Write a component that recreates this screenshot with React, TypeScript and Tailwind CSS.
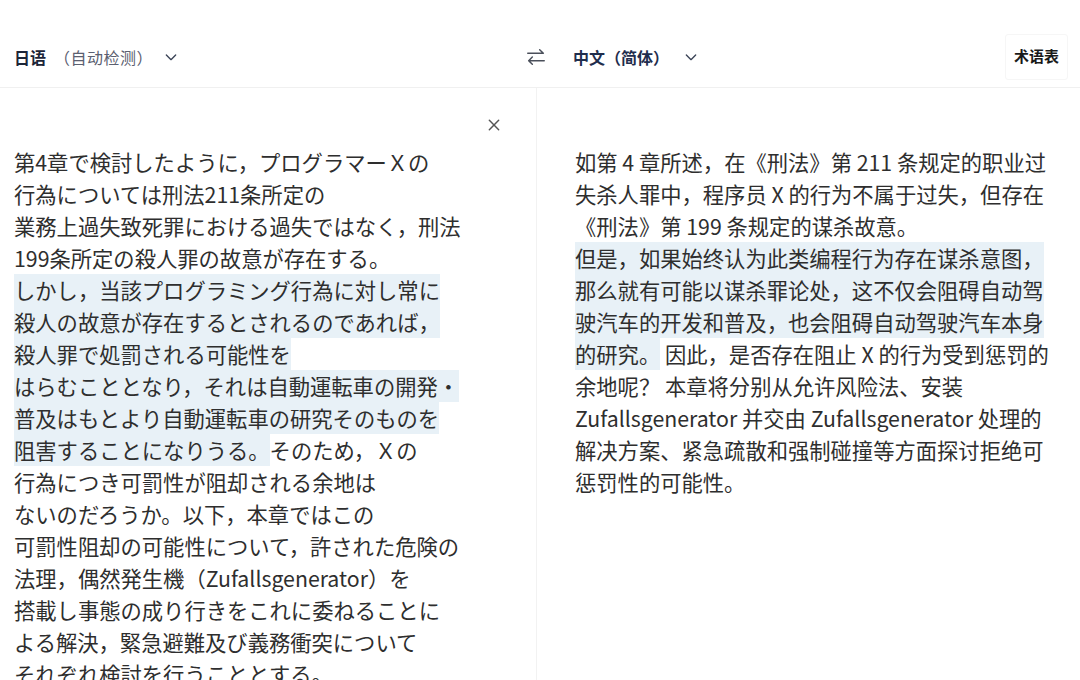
import React from "react";

const FONT = { fontFamily: '"Noto Sans CJK SC", "Noto Sans", sans-serif' };
const FONT_JP = { fontFamily: '"Noto Sans CJK JP", "Noto Sans CJK SC", "Noto Sans", sans-serif' };

type Seg = { t: string; hl?: boolean };

const left: Seg[][] = [
  [{ t: "第4章で検討したように，プログラマーＸの" }],
  [{ t: "行為については刑法211条所定の" }],
  [{ t: "業務上過失致死罪における過失ではなく，刑法" }],
  [{ t: "199条所定の殺人罪の故意が存在する。" }],
  [{ t: "しかし，当該プログラミング行為に対し常に", hl: true }],
  [{ t: "殺人の故意が存在するとされるのであれば，", hl: true }],
  [{ t: "殺人罪で処罰される可能性を", hl: true }],
  [{ t: "はらむこととなり，それは自動運転車の開発・", hl: true }],
  [{ t: "普及はもとより自動運転車の研究そのものを", hl: true }],
  [{ t: "阻害することになりうる。", hl: true }, { t: "そのため，Ｘの" }],
  [{ t: "行為につき可罰性が阻却される余地は" }],
  [{ t: "ないのだろうか。以下，本章ではこの" }],
  [{ t: "可罰性阻却の可能性について，許された危険の" }],
  [{ t: "法理，偶然発生機（Zufallsgenerator）を" }],
  [{ t: "搭載し事態の成り行きをこれに委ねることに" }],
  [{ t: "よる解決，緊急避難及び義務衝突について" }],
  [{ t: "それぞれ検討を行うこととする。" }],
];

const right: Seg[][] = [
  [{ t: "如第 4 章所述，在《刑法》第 211 条规定的职业过" }],
  [{ t: "失杀人罪中，程序员 X 的行为不属于过失，但存在" }],
  [{ t: "《刑法》第 199 条规定的谋杀故意。" }],
  [{ t: "但是，如果始终认为此类编程行为存在谋杀意图，", hl: true }],
  [{ t: "那么就有可能以谋杀罪论处，这不仅会阻碍自动驾", hl: true }],
  [{ t: "驶汽车的开发和普及，也会阻碍自动驾驶汽车本身", hl: true }],
  [{ t: "的研究。", hl: true }, { t: " 因此，是否存在阻止 X 的行为受到惩罚的" }],
  [{ t: "余地呢？ 本章将分别从允许风险法、安装" }],
  [{ t: "Zufallsgenerator 并交由 Zufallsgenerator 处理的" }],
  [{ t: "解决方案、紧急疏散和强制碰撞等方面探讨拒绝可" }],
  [{ t: "惩罚性的可能性。" }],
];

function Lines({ lines }: { lines: Seg[][] }) {
  return (
    <div className="flex flex-col">
      {lines.map((line, i) => (
        <div key={i} className="flex h-[32px] items-center whitespace-pre">
          {line.map((s, j) => (
            <span
              key={j}
              className={
                s.hl
                  ? "flex h-[32px] items-center bg-[#e8f1f7]"
                  : "flex h-[32px] items-center"
              }
            >
              {s.t}
            </span>
          ))}
        </div>
      ))}
    </div>
  );
}

function Chevron() {
  return (
    <svg width="16" height="16" viewBox="0 0 24 24" fill="none" stroke="#3a4356" strokeWidth="2" strokeLinecap="round" strokeLinejoin="round">
      <path d="M5 9l7 7 7-7" />
    </svg>
  );
}

export default function App() {
  return (
    <div className="w-[1080px] h-[680px] overflow-hidden bg-white flex flex-col" style={FONT}>
      <div className="h-[88px] shrink-0 border-b border-[#f0f0f0] flex items-center pt-[26px]">
        <div className="w-[537px] flex items-center pl-[14px]">
          <span className="text-[16px] font-bold text-[#1c2538]">日语</span>
          <span className="text-[16px] text-[#5b6070] ml-[8px] tracking-[0.5px]">（自动检测）</span>
          <span className="ml-[10px] flex items-center"><Chevron /></span>
        </div>
        <div className="flex-1 flex items-center">
          <span className="ml-[-12px] flex items-center">
            <svg width="22" height="22" viewBox="0 0 24 24" fill="none" stroke="#4a4f5a" strokeWidth="1.6" strokeLinecap="round" strokeLinejoin="round">
              <path d="M3 8h17M16 4l4 4" />
              <path d="M21 16H4M8 12l-4 4 4 4" />
            </svg>
          </span>
          <span className="ml-[26px] text-[16px] font-bold text-[#1f2d4d]">中文（简体）</span>
          <span className="ml-[14px] flex items-center"><Chevron /></span>
          <div className="ml-auto mr-[12px] h-[46px] px-[8px] flex items-center border border-[#f6f6f6] rounded-[3px]">
            <span className="text-[15px] font-bold text-[#1a1a1a]">术语表</span>
          </div>
        </div>
      </div>
      <div className="flex flex-1">
        <div className="w-[537px] shrink-0 border-r border-[#f2f2f2] flex flex-col">
          <div className="h-[58px] flex justify-end items-start pt-[29px] pr-[34px]">
            <svg width="16" height="16" viewBox="0 0 24 24" fill="none" stroke="#555" strokeWidth="2.2" strokeLinecap="round">
              <path d="M5 5l14 14M19 5L5 19" />
            </svg>
          </div>
          <div className="pl-[14px] text-[21.3px] text-[#2e2e2e]" style={FONT_JP}>
            <Lines lines={left} />
          </div>
        </div>
        <div className="flex-1 flex flex-col">
          <div className="h-[58px]" />
          <div className="pl-[38px] text-[21.3px] text-[#2e2e2e]">
            <Lines lines={right} />
          </div>
        </div>
      </div>
    </div>
  );
}
